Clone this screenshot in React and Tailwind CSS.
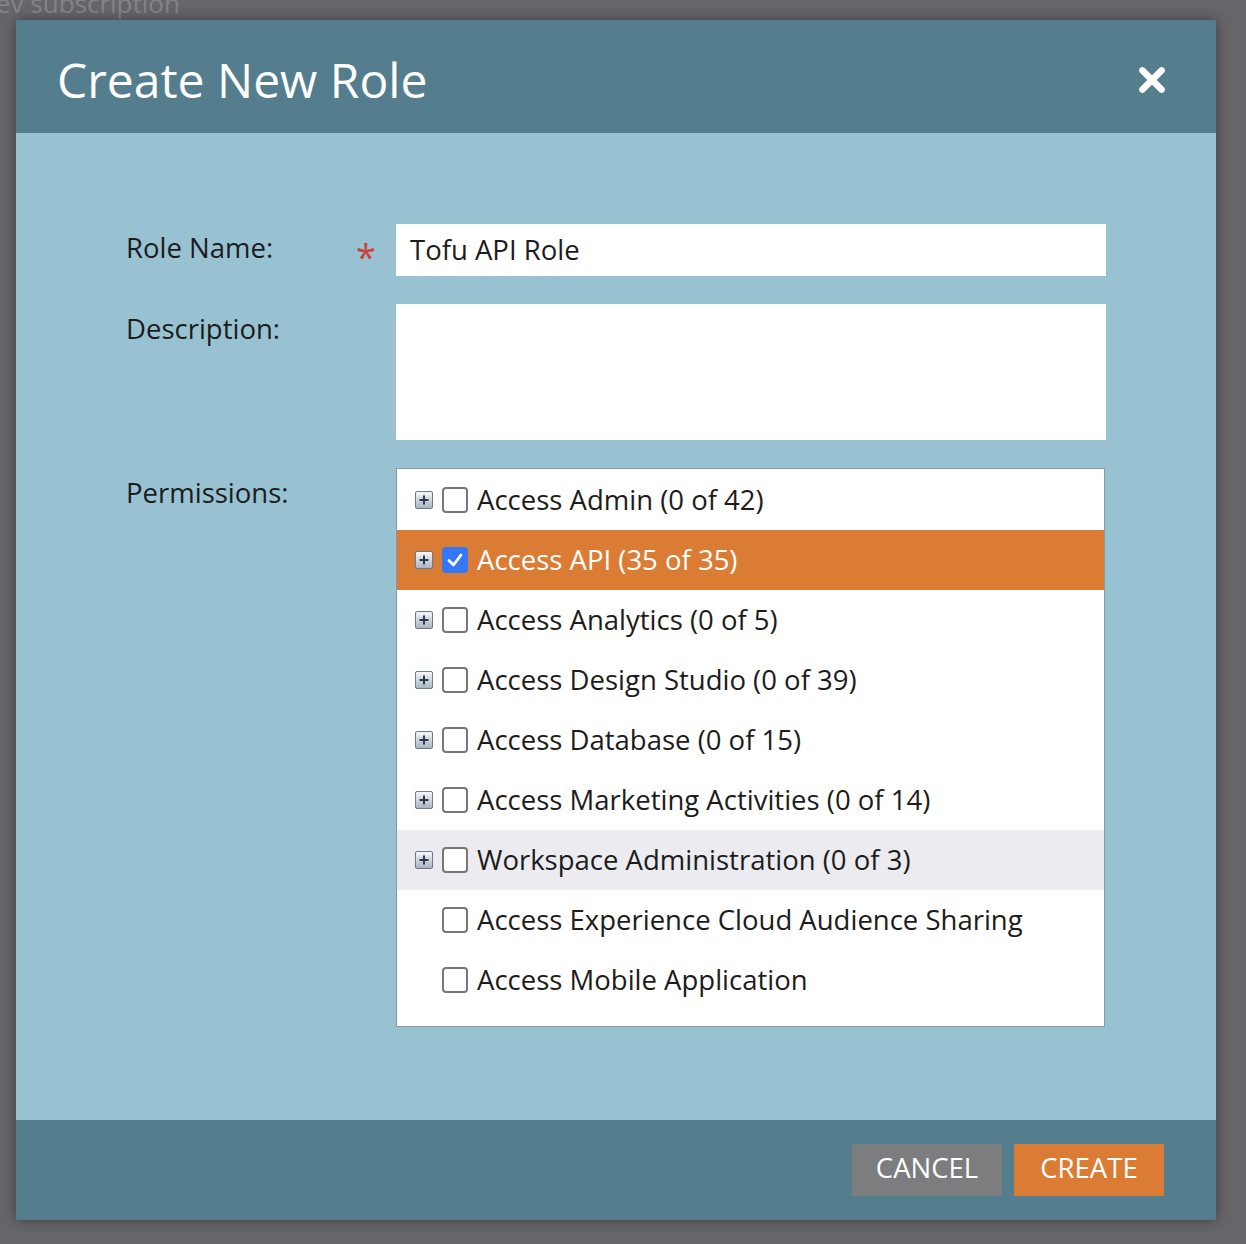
const perms = [
  { label: "Access Admin (0 of 42)", plus: true },
  { label: "Access API (35 of 35)", plus: true, checked: true, active: true },
  { label: "Access Analytics (0 of 5)", plus: true },
  { label: "Access Design Studio (0 of 39)", plus: true },
  { label: "Access Database (0 of 15)", plus: true },
  { label: "Access Marketing Activities (0 of 14)", plus: true },
  { label: "Workspace Administration (0 of 3)", plus: true, hover: true },
  { label: "Access Experience Cloud Audience Sharing" },
  { label: "Access Mobile Application" },
];

const PlusBox = () => (
  <span className="w-[18px] h-[18px] shrink-0 border border-[#6f7b8a] rounded-[2px] bg-gradient-to-b from-[#f4f6f9] to-[#aab4c2] flex items-center justify-center">
    <svg width="12" height="12" viewBox="0 0 12 12">
      <path d="M6 1.5 V10.5 M1.5 6 H10.5" stroke="#2d3a4c" strokeWidth="2" />
    </svg>
  </span>
);

export default function App() {
  return (
    <div className="w-[1246px] h-[1244px] bg-[#67656a] relative overflow-hidden" style={{ fontFamily: '"Open Sans", sans-serif' }}>
      <div className="absolute left-[-4px] top-[-16px] text-[26px] text-[#85838a]">ev subscription</div>
      <div className="absolute left-[16px] top-[20px] w-[1200px] h-[1200px] flex flex-col shadow-[0_0_12px_rgba(0,0,0,0.4)]">
        <div className="h-[113px] bg-[#547d8e] flex items-center justify-between pl-[41px] pr-[41px]">
          <h1 className="text-white text-[48px] leading-none mt-[6px]">Create New Role</h1>
          <svg width="30" height="30" viewBox="0 0 28 28" className="mr-[8px] mt-[6px]">
            <path d="M5 5 L23 23 M23 5 L5 23" stroke="white" strokeWidth="6" strokeLinecap="round" />
          </svg>
        </div>
        <div className="flex-1 bg-[#98c2d2] pt-[91px] pl-[110px] text-[#1c1c1c] text-[27.5px]">
          <div className="flex items-center h-[52px]">
            <span className="w-[230px] -mt-[4px]">Role Name:</span>
            <span className="w-[40px] text-[#c8413a] text-[36px] mt-[14px] pl-[0px]">*</span>
            <div className="w-[710px] h-[52px] bg-white flex items-center px-[14px]">Tofu API Role</div>
          </div>
          <div className="flex mt-[28px]">
            <span className="w-[270px] pt-[4px]">Description:</span>
            <div className="w-[710px] h-[136px] bg-white" />
          </div>
          <div className="flex mt-[28px]">
            <span className="w-[270px] pt-[4px]">Permissions:</span>
            <div className="w-[709px] h-[559px] bg-white border border-[#8a9aa4] pt-[1px]">
              {perms.map((p) => (
                <div
                  key={p.label}
                  className={`h-[60px] flex items-center pl-[18px] gap-[9px] ${p.active ? "bg-[#db7c35] text-white" : p.hover ? "bg-[#ebebf0]" : ""}`}
                >
                  {p.plus ? <PlusBox /> : <span className="w-[18px]" />}
                  {p.checked ? (
                    <span className="w-[26px] h-[26px] rounded-[4px] bg-[#3478f6] flex items-center justify-center">
                      <svg width="18" height="18" viewBox="0 0 18 18">
                        <path d="M3 9.5 L7.5 14 L15 4" stroke="white" strokeWidth="2.8" fill="none" strokeLinecap="round" strokeLinejoin="round" />
                      </svg>
                    </span>
                  ) : (
                    <span className="w-[26px] h-[26px] rounded-[4px] border-2 border-[#777] bg-white" />
                  )}
                  <span className="ml-[0px]">{p.label}</span>
                </div>
              ))}
            </div>
          </div>
        </div>
        <div className="h-[100px] bg-[#547d8e] flex items-center justify-end gap-[12px] pr-[52px]">
          <button className="w-[150px] h-[52px] bg-[#7c7d7f] text-white text-[27.5px] leading-none pb-[4px]">CANCEL</button>
          <button className="w-[150px] h-[52px] bg-[#db7c35] text-white text-[27.5px] leading-none pb-[4px]">CREATE</button>
        </div>
      </div>
    </div>
  );
}
